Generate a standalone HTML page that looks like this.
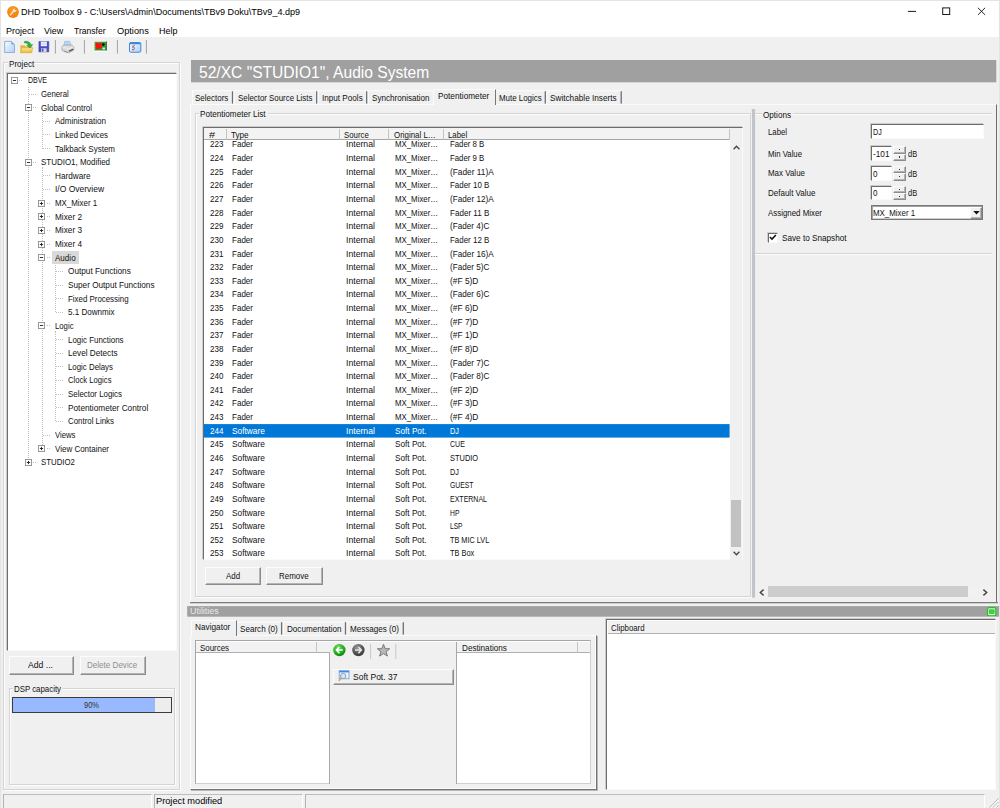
<!DOCTYPE html>
<html><head><meta charset="utf-8"><title>DHD Toolbox 9</title>
<style>
*{box-sizing:border-box;margin:0;padding:0}
html,body{width:1000px;height:808px;overflow:hidden;background:#f0f0f0}
body{font-family:"Liberation Sans",sans-serif;font-size:8.8px;color:#111;position:relative;letter-spacing:-0.3px}
body div,body span,body svg,body i,body b{position:absolute;display:block}
.x{white-space:nowrap;line-height:12px;height:12px;transform-origin:0 50%;letter-spacing:0;transform:scaleX(0.9)}
.gb{border:1px solid #d4d4d4;box-shadow:1px 1px 0 #fdfdfd, inset 1px 1px 0 #fdfdfd}
.sunk{background:#fff;border:1px solid #6c6c6c;border-right-color:#fafafa;border-bottom-color:#fafafa;box-shadow:-1px -1px 0 #cdcdcd}
.btn{background:#f0f0f0;border:1px solid #fcfcfc;border-right-color:#8c8c8c;border-bottom-color:#8c8c8c;box-shadow:inset -1px -1px 0 #b4b4b4}
.tsep{width:1.3px;background:#8e8e8e}
.csep{width:1px;background:#c4c4c4}
.hl{height:0;border-top:1px dotted #c0c0c0}
.vl{width:0;border-left:1px dotted #c0c0c0}
.ex{width:7px;height:7px;border:1px solid #959595;background:#fff}
.ex i{left:1px;top:2px;width:3px;height:1px;background:#222}
.ex b{left:2px;top:1px;width:1px;height:3px;background:#222}
</style></head><body>
<div style="left:0.0px;top:0.0px;width:1000.0px;height:37.0px;background:#fff"></div>
<div style="left:0.0px;top:0.0px;width:1000.0px;height:1.0px;background:#e4e4e4"></div>
<div style="left:999.0px;top:0.0px;width:1.0px;height:808.0px;background:#e4e4e4"></div>
<div style="left:0.0px;top:0.0px;width:1.0px;height:808.0px;background:#e4e4e4"></div>
<svg style="left:6.9px;top:5.6px" width="12" height="12" viewBox="0 0 12 12"><defs><radialGradient id="og" cx="0.45" cy="0.3" r="0.75"><stop offset="0" stop-color="#ff9a24"/><stop offset="1" stop-color="#f07c08"/></radialGradient></defs><circle cx="6" cy="6" r="5.9" fill="url(#og)"/><path d="M3.5 8.7L6.5 5.2" stroke="#f8e4cc" stroke-width="1.5" stroke-linecap="round"/><circle cx="7.6" cy="4.2" r="1.8" fill="#f8e4cc"/><path d="M7.9 3.9L9.9 1.9" stroke="#f5860f" stroke-width="1.25"/></svg>
<div class="x" style="left:21.2px;top:6.24px;font-size:9.5px;color:#000;letter-spacing:0;transform:scaleX(0.953);">DHD Toolbox 9 - C:\Users\Admin\Documents\TBv9 Doku\TBv9_4.dp9</div>
<svg style="left:900px;top:0px" width="100" height="24" viewBox="0 0 100 24"><path d="M7.9 11.4h8.1" stroke="#1a1a1a" stroke-width="1"/><rect x="42.7" y="7.9" width="7" height="6.6" fill="none" stroke="#1a1a1a" stroke-width="1"/><path d="M77.9 7.8l7.2 7.1M85.1 7.8l-7.2 7.1" stroke="#1a1a1a" stroke-width="0.95"/></svg>
<div class="x" style="left:6.0px;top:24.99px;font-size:9.5px;color:#000;letter-spacing:0;transform:scaleX(0.947);">Project</div>
<div class="x" style="left:44.4px;top:24.99px;font-size:9.5px;color:#000;letter-spacing:0;transform:scaleX(0.940);">View</div>
<div class="x" style="left:74.4px;top:24.99px;font-size:9.5px;color:#000;letter-spacing:0;transform:scaleX(0.902);">Transfer</div>
<div class="x" style="left:116.6px;top:24.99px;font-size:9.5px;color:#000;letter-spacing:0;transform:scaleX(0.971);">Options</div>
<div class="x" style="left:159.2px;top:24.99px;font-size:9.5px;color:#000;letter-spacing:0;transform:scaleX(0.941);">Help</div>
<svg style="left:0px;top:38px" width="160" height="20" viewBox="0 38 160 20"><defs><linearGradient id="pg" x1="0" y1="0" x2="1" y2="1"><stop offset="0" stop-color="#fdfeff"/><stop offset="1" stop-color="#a9d2f7"/></linearGradient><linearGradient id="fg" x1="0" y1="0" x2="0" y2="1"><stop offset="0" stop-color="#fbe793"/><stop offset="1" stop-color="#e8b93c"/></linearGradient><linearGradient id="wg" x1="0" y1="0" x2="1" y2="1"><stop offset="0" stop-color="#ffffff"/><stop offset="1" stop-color="#a8d0fa"/></linearGradient></defs><path d="M4.7 41.4h6.6l3.2 3.1v8h-9.8z" fill="url(#pg)" stroke="#8fa3dd" stroke-width="0.9"/><path d="M11.3 41.4v3.1h3.2z" fill="#6fa8ea"/><path d="M20.4 45.2h4.2l1 1.2h6.6v6.3H20.4z" fill="#e2b437"/><path d="M21.9 47.8h11l-1.6 5H20.4z" fill="url(#fg)" stroke="#d9a82c" stroke-width="0.5"/><path d="M24.3 41.5c3.3-.9 6 .4 6.6 3.3l1.9-.4-2.8 3.5-3.4-2.4 1.8-.3c-.5-1.6-1.9-2.4-4.1-2.3z" fill="#2fae3a" stroke="#1f8f2a" stroke-width="0.4"/><path d="M38.9 41.5h9.9v10.4h-9.9z" fill="#4a4ec4" stroke="#3a3aa8" stroke-width="0.5"/><rect x="40.8" y="41.6" width="6.1" height="4.6" fill="#f4f4f8"/><path d="M41.3 43h5.1M41.3 44.4h5.1" stroke="#c5c5d8" stroke-width="0.6"/><rect x="41" y="48.3" width="5.6" height="3.6" fill="#d9d9e6"/><rect x="41.7" y="48.8" width="1.7" height="2.8" fill="#4a4ec4"/><rect x="54.9" y="40" width="1" height="13.6" fill="#a3a3a3"/><path d="M64.6 41.3h5.3l1.2 4.6h-7.2z" fill="#b8d6f5" stroke="#8fb0de" stroke-width="0.5"/><path d="M62 46.2l2-1.2h7.4l2.4 1.6v3.6l-5 2.6-6.8-2.4z" fill="#dcdcdc" stroke="#8e8e8e" stroke-width="0.6"/><path d="M62.2 46.6l6.5 2.2 4.9-2.2" fill="none" stroke="#f6f6f6" stroke-width="0.7"/><path d="M68.9 51.3l4.2-2.1" stroke="#3a3a3a" stroke-width="1.1"/><path d="M64 51.2l3.8 1.3" stroke="#7a7a7a" stroke-width="0.7"/><rect x="83.9" y="40" width="1" height="13.6" fill="#a3a3a3"/><rect x="94.6" y="41.8" width="12.2" height="10" fill="#fff"/><rect x="94.6" y="41.8" width="12.2" height="8.7" fill="#2e9a35"/><path d="M95.5 43l2-.6 1.2 1 2-1.2 1.2 1.5-.5 2.2 1 1.6-1.5 1.3-1.8-.6-1.5 1.4-1.6-1-.5-2.5z" fill="#ff1010"/><path d="M95.6 42.2h5.5M95 43v6" stroke="#e6d23c" stroke-width="0.6" stroke-dasharray="0.8 0.8"/><circle cx="103.3" cy="44.6" r="1.3" fill="#0a0a0a"/><rect x="102.4" y="47.6" width="2.6" height="1.8" fill="#d8efd8"/><rect x="106.2" y="41.3" width="0.7" height="9.2" fill="#555"/><rect x="116.9" y="40" width="1" height="13.6" fill="#a3a3a3"/><rect x="129.5" y="42.5" width="11.3" height="9.7" rx="1.3" fill="url(#wg)" stroke="#3f86e0" stroke-width="1"/><path d="M129.5 44.3v-.6a1.3 1.3 0 0 1 1.3-1.3h8.7a1.3 1.3 0 0 1 1.3 1.3v.6z" fill="#3f86e0"/><path d="M132.2 45.6l1 1.2 1.4-1.9M132.2 49l1 1.2 1.4-1.9" stroke="#a33c2a" stroke-width="0.9" fill="none"/><path d="M132 47.6h2.8" stroke="#666" stroke-width="0.6"/><rect x="145.9" y="40" width="1" height="13.6" fill="#a3a3a3"/></svg>
<div class="gb" style="left:3.0px;top:62.4px;width:176.6px;height:727.7px;"></div>
<div style="left:7.8px;top:58.0px;width:27.0px;height:11.0px;background:#f0f0f0"></div>
<div class="x" style="left:8.8px;top:57.50px;letter-spacing:0;transform:scaleX(0.920);">Project</div>
<div class="sunk" style="left:7.0px;top:72.5px;width:169.5px;height:578.5px;"></div>
<div class="vl" style="left:27.9px;top:87.40px;height:371.00px"></div>
<div class="vl" style="left:41.5px;top:112.69px;height:35.93px"></div>
<div class="vl" style="left:41.5px;top:167.26px;height:277.50px"></div>
<div class="vl" style="left:55.1px;top:262.76px;height:49.57px"></div>
<div class="vl" style="left:55.1px;top:330.97px;height:90.50px"></div>
<div class="x" style="left:27.6px;top:74.30px;letter-spacing:0;transform:scaleX(0.793);">DBVE</div>
<svg style="left:11.10px;top:76.80px" width="7" height="7" viewBox="0 0 7 7"><rect x="0.45" y="0.45" width="6.1" height="6.1" fill="#fff" stroke="#8f8f8f" stroke-width="0.9"/><path d="M1.9 3.5h3.2" stroke="#1c1c1c" stroke-width="0.9"/></svg>
<div class="hl" style="left:19.3px;top:79.90px;width:3px"></div>
<div class="x" style="left:41.2px;top:87.94px;letter-spacing:0;transform:scaleX(0.888);">General</div>
<div class="hl" style="left:28.9px;top:93.54px;width:7px"></div>
<div class="x" style="left:41.2px;top:101.58px;letter-spacing:0;transform:scaleX(0.907);">Global Control</div>
<svg style="left:24.70px;top:104.09px" width="7" height="7" viewBox="0 0 7 7"><rect x="0.45" y="0.45" width="6.1" height="6.1" fill="#fff" stroke="#8f8f8f" stroke-width="0.9"/><path d="M1.9 3.5h3.2" stroke="#1c1c1c" stroke-width="0.9"/></svg>
<div class="hl" style="left:32.9px;top:107.19px;width:3px"></div>
<div class="x" style="left:54.8px;top:115.23px;letter-spacing:0;transform:scaleX(0.915);">Administration</div>
<div class="hl" style="left:42.5px;top:120.83px;width:7px"></div>
<div class="x" style="left:54.8px;top:128.87px;letter-spacing:0;transform:scaleX(0.888);">Linked Devices</div>
<div class="hl" style="left:42.5px;top:134.47px;width:7px"></div>
<div class="x" style="left:54.8px;top:142.51px;letter-spacing:0;transform:scaleX(0.909);">Talkback System</div>
<div class="hl" style="left:42.5px;top:148.12px;width:7px"></div>
<div class="x" style="left:41.2px;top:156.16px;letter-spacing:0;transform:scaleX(0.905);">STUDIO1, Modified</div>
<svg style="left:24.70px;top:158.66px" width="7" height="7" viewBox="0 0 7 7"><rect x="0.45" y="0.45" width="6.1" height="6.1" fill="#fff" stroke="#8f8f8f" stroke-width="0.9"/><path d="M1.9 3.5h3.2" stroke="#1c1c1c" stroke-width="0.9"/></svg>
<div class="hl" style="left:32.9px;top:161.76px;width:3px"></div>
<div class="x" style="left:54.8px;top:169.80px;letter-spacing:0;transform:scaleX(0.931);">Hardware</div>
<div class="hl" style="left:42.5px;top:175.40px;width:7px"></div>
<div class="x" style="left:54.8px;top:183.44px;letter-spacing:0;transform:scaleX(0.964);">I/O Overview</div>
<div class="hl" style="left:42.5px;top:189.04px;width:7px"></div>
<div class="x" style="left:54.8px;top:197.09px;letter-spacing:0;transform:scaleX(0.899);">MX_Mixer 1</div>
<svg style="left:38.30px;top:199.59px" width="7" height="7" viewBox="0 0 7 7"><rect x="0.45" y="0.45" width="6.1" height="6.1" fill="#fff" stroke="#8f8f8f" stroke-width="0.9"/><path d="M1.9 3.5h3.2" stroke="#1c1c1c" stroke-width="0.9"/><path d="M3.5 1.9v3.2" stroke="#1c1c1c" stroke-width="0.9"/></svg>
<div class="hl" style="left:46.5px;top:202.69px;width:3px"></div>
<div class="x" style="left:54.8px;top:210.73px;letter-spacing:0;transform:scaleX(0.936);">Mixer 2</div>
<svg style="left:38.30px;top:213.23px" width="7" height="7" viewBox="0 0 7 7"><rect x="0.45" y="0.45" width="6.1" height="6.1" fill="#fff" stroke="#8f8f8f" stroke-width="0.9"/><path d="M1.9 3.5h3.2" stroke="#1c1c1c" stroke-width="0.9"/><path d="M3.5 1.9v3.2" stroke="#1c1c1c" stroke-width="0.9"/></svg>
<div class="hl" style="left:46.5px;top:216.33px;width:3px"></div>
<div class="x" style="left:54.8px;top:224.37px;letter-spacing:0;transform:scaleX(0.936);">Mixer 3</div>
<svg style="left:38.30px;top:226.87px" width="7" height="7" viewBox="0 0 7 7"><rect x="0.45" y="0.45" width="6.1" height="6.1" fill="#fff" stroke="#8f8f8f" stroke-width="0.9"/><path d="M1.9 3.5h3.2" stroke="#1c1c1c" stroke-width="0.9"/><path d="M3.5 1.9v3.2" stroke="#1c1c1c" stroke-width="0.9"/></svg>
<div class="hl" style="left:46.5px;top:229.97px;width:3px"></div>
<div class="x" style="left:54.8px;top:238.01px;letter-spacing:0;transform:scaleX(0.936);">Mixer 4</div>
<svg style="left:38.30px;top:240.52px" width="7" height="7" viewBox="0 0 7 7"><rect x="0.45" y="0.45" width="6.1" height="6.1" fill="#fff" stroke="#8f8f8f" stroke-width="0.9"/><path d="M1.9 3.5h3.2" stroke="#1c1c1c" stroke-width="0.9"/><path d="M3.5 1.9v3.2" stroke="#1c1c1c" stroke-width="0.9"/></svg>
<div class="hl" style="left:46.5px;top:243.62px;width:3px"></div>
<div style="left:52.2px;top:251.0px;width:26.8px;height:13.2px;background:#d9d9d9"></div>
<div class="x" style="left:54.8px;top:251.66px;letter-spacing:0;transform:scaleX(0.916);">Audio</div>
<svg style="left:38.30px;top:254.16px" width="7" height="7" viewBox="0 0 7 7"><rect x="0.45" y="0.45" width="6.1" height="6.1" fill="#fff" stroke="#8f8f8f" stroke-width="0.9"/><path d="M1.9 3.5h3.2" stroke="#1c1c1c" stroke-width="0.9"/></svg>
<div class="hl" style="left:46.5px;top:257.26px;width:3px"></div>
<div class="x" style="left:68.4px;top:265.30px;letter-spacing:0;transform:scaleX(0.937);">Output Functions</div>
<div class="hl" style="left:56.1px;top:270.90px;width:7px"></div>
<div class="x" style="left:68.4px;top:278.94px;letter-spacing:0;transform:scaleX(0.931);">Super Output Functions</div>
<div class="hl" style="left:56.1px;top:284.55px;width:7px"></div>
<div class="x" style="left:68.4px;top:292.59px;letter-spacing:0;transform:scaleX(0.897);">Fixed Processing</div>
<div class="hl" style="left:56.1px;top:298.19px;width:7px"></div>
<div class="x" style="left:68.4px;top:306.23px;letter-spacing:0;transform:scaleX(0.914);">5.1 Downmix</div>
<div class="hl" style="left:56.1px;top:311.83px;width:7px"></div>
<div class="x" style="left:54.8px;top:319.87px;letter-spacing:0;transform:scaleX(0.880);">Logic</div>
<svg style="left:38.30px;top:322.37px" width="7" height="7" viewBox="0 0 7 7"><rect x="0.45" y="0.45" width="6.1" height="6.1" fill="#fff" stroke="#8f8f8f" stroke-width="0.9"/><path d="M1.9 3.5h3.2" stroke="#1c1c1c" stroke-width="0.9"/></svg>
<div class="hl" style="left:46.5px;top:325.47px;width:3px"></div>
<div class="x" style="left:68.4px;top:333.52px;letter-spacing:0;transform:scaleX(0.901);">Logic Functions</div>
<div class="hl" style="left:56.1px;top:339.12px;width:7px"></div>
<div class="x" style="left:68.4px;top:347.16px;letter-spacing:0;transform:scaleX(0.929);">Level Detects</div>
<div class="hl" style="left:56.1px;top:352.76px;width:7px"></div>
<div class="x" style="left:68.4px;top:360.80px;letter-spacing:0;transform:scaleX(0.893);">Logic Delays</div>
<div class="hl" style="left:56.1px;top:366.40px;width:7px"></div>
<div class="x" style="left:68.4px;top:374.44px;letter-spacing:0;transform:scaleX(0.872);">Clock Logics</div>
<div class="hl" style="left:56.1px;top:380.05px;width:7px"></div>
<div class="x" style="left:68.4px;top:388.09px;letter-spacing:0;transform:scaleX(0.898);">Selector Logics</div>
<div class="hl" style="left:56.1px;top:393.69px;width:7px"></div>
<div class="x" style="left:68.4px;top:401.73px;letter-spacing:0;transform:scaleX(0.938);">Potentiometer Control</div>
<div class="hl" style="left:56.1px;top:407.33px;width:7px"></div>
<div class="x" style="left:68.4px;top:415.37px;letter-spacing:0;transform:scaleX(0.896);">Control Links</div>
<div class="hl" style="left:56.1px;top:420.98px;width:7px"></div>
<div class="x" style="left:54.8px;top:429.02px;letter-spacing:0;transform:scaleX(0.879);">Views</div>
<div class="hl" style="left:42.5px;top:434.62px;width:7px"></div>
<div class="x" style="left:54.8px;top:442.66px;letter-spacing:0;transform:scaleX(0.908);">View Container</div>
<svg style="left:38.30px;top:445.16px" width="7" height="7" viewBox="0 0 7 7"><rect x="0.45" y="0.45" width="6.1" height="6.1" fill="#fff" stroke="#8f8f8f" stroke-width="0.9"/><path d="M1.9 3.5h3.2" stroke="#1c1c1c" stroke-width="0.9"/><path d="M3.5 1.9v3.2" stroke="#1c1c1c" stroke-width="0.9"/></svg>
<div class="hl" style="left:46.5px;top:448.26px;width:3px"></div>
<div class="x" style="left:41.2px;top:456.30px;letter-spacing:0;transform:scaleX(0.891);">STUDIO2</div>
<svg style="left:24.70px;top:458.80px" width="7" height="7" viewBox="0 0 7 7"><rect x="0.45" y="0.45" width="6.1" height="6.1" fill="#fff" stroke="#8f8f8f" stroke-width="0.9"/><path d="M1.9 3.5h3.2" stroke="#1c1c1c" stroke-width="0.9"/><path d="M3.5 1.9v3.2" stroke="#1c1c1c" stroke-width="0.9"/></svg>
<div class="hl" style="left:32.9px;top:461.90px;width:3px"></div>
<div class="btn" style="left:8.8px;top:656.0px;width:65.5px;height:19.0px;"></div>
<div class="x" style="left:27.9px;top:658.80px;letter-spacing:0;transform:scaleX(0.983);">Add ...</div>
<div class="btn" style="left:79.5px;top:656.0px;width:66.0px;height:19.0px;"></div>
<div class="x" style="left:86.5px;top:658.80px;color:#8f8f8f;letter-spacing:0;transform:scaleX(0.917);">Delete Device</div>
<div class="gb" style="left:8.5px;top:688.0px;width:166.0px;height:96.5px;"></div>
<div style="left:12.5px;top:683.0px;width:50.0px;height:11.0px;background:#f0f0f0"></div>
<div class="x" style="left:14.0px;top:683.20px;letter-spacing:0;transform:scaleX(0.893);">DSP capacity</div>
<div style="left:12.0px;top:697.3px;width:160.3px;height:15.5px;background:#ededed;border:1px solid #3c3c3c"></div>
<div style="left:13.0px;top:698.3px;width:142.3px;height:13.5px;background:#99b9fe"></div>
<div class="x" style="left:84.4px;top:698.80px;color:#333;letter-spacing:0;transform:scaleX(0.852);">90%</div>
<svg style="left:191px;top:60px" width="806" height="23"><rect x="0.00" y="0.00" width="805.30" height="22.30" fill="#a0a0a0"/></svg>
<div class="x" style="left:198.5px;top:61.81px;font-size:16.2px;color:#fff;line-height:20px;height:20px;letter-spacing:0;transform:scaleX(0.963);">52/XC "STUDIO1", Audio System</div>
<div style="left:189.5px;top:104.0px;width:807.5px;height:498.0px;border-top:1px solid #fbfbfb;border-left:1px solid #fbfbfb;border-right:1px solid #6e6e6e;"></div>
<div class="x" style="left:194.8px;top:91.60px;letter-spacing:0;transform:scaleX(0.908);">Selectors</div>
<svg style="left:231px;top:91px" width="3" height="13"><rect x="0.85" y="0.20" width="1.30" height="12.40" fill="#6e6e6e"/></svg>
<div class="x" style="left:237.7px;top:91.60px;letter-spacing:0;transform:scaleX(0.895);">Selector Source Lists</div>
<svg style="left:316px;top:91px" width="2" height="13"><rect x="0.05" y="0.20" width="1.30" height="12.40" fill="#6e6e6e"/></svg>
<div class="x" style="left:321.6px;top:91.60px;letter-spacing:0;transform:scaleX(0.925);">Input Pools</div>
<svg style="left:366px;top:91px" width="2" height="13"><rect x="0.05" y="0.20" width="1.30" height="12.40" fill="#6e6e6e"/></svg>
<div class="x" style="left:371.5px;top:91.60px;letter-spacing:0;transform:scaleX(0.920);">Synchronisation</div>
<div class="x" style="left:498.7px;top:91.60px;letter-spacing:0;transform:scaleX(0.900);">Mute Logics</div>
<svg style="left:544px;top:91px" width="2" height="13"><rect x="0.65" y="0.20" width="1.30" height="12.40" fill="#6e6e6e"/></svg>
<div class="x" style="left:550.4px;top:91.60px;letter-spacing:0;transform:scaleX(0.933);">Switchable Inserts</div>
<svg style="left:620px;top:91px" width="2" height="13"><rect x="0.55" y="0.20" width="1.30" height="12.40" fill="#6e6e6e"/></svg>
<svg style="left:192px;top:90px" width="41" height="2"><rect x="0.00" y="0.20" width="40.30" height="1.00" fill="#fcfcfc"/></svg>
<svg style="left:192px;top:90px" width="1" height="14"><rect x="0.00" y="0.20" width="1.00" height="13.80" fill="#fcfcfc"/></svg>
<svg style="left:233px;top:90px" width="84" height="2"><rect x="0.60" y="0.20" width="82.90" height="1.00" fill="#fcfcfc"/></svg>
<svg style="left:233px;top:90px" width="2" height="14"><rect x="0.60" y="0.20" width="1.00" height="13.80" fill="#fcfcfc"/></svg>
<svg style="left:317px;top:90px" width="50" height="2"><rect x="0.80" y="0.20" width="48.70" height="1.00" fill="#fcfcfc"/></svg>
<svg style="left:317px;top:90px" width="2" height="14"><rect x="0.80" y="0.20" width="1.00" height="13.80" fill="#fcfcfc"/></svg>
<svg style="left:367px;top:90px" width="66" height="2"><rect x="0.80" y="0.20" width="65.20" height="1.00" fill="#fcfcfc"/></svg>
<svg style="left:367px;top:90px" width="2" height="14"><rect x="0.80" y="0.20" width="1.00" height="13.80" fill="#fcfcfc"/></svg>
<svg style="left:496px;top:90px" width="50" height="2"><rect x="0.60" y="0.20" width="48.50" height="1.00" fill="#fcfcfc"/></svg>
<svg style="left:546px;top:90px" width="75" height="2"><rect x="0.40" y="0.20" width="74.60" height="1.00" fill="#fcfcfc"/></svg>
<svg style="left:546px;top:90px" width="2" height="14"><rect x="0.40" y="0.20" width="1.00" height="13.80" fill="#fcfcfc"/></svg>
<div style="left:433.0px;top:88.5px;width:63.0px;height:16.5px;background:#f0f0f0;border-top:1px solid #fbfbfb;border-left:1px solid #fbfbfb;border-right:1.5px solid #777"></div>
<div class="x" style="left:437.9px;top:90.10px;letter-spacing:0;transform:scaleX(0.936);">Potentiometer</div>
<div class="gb" style="left:195.0px;top:113.0px;width:555.5px;height:484.0px;"></div>
<div style="left:198.5px;top:108.0px;width:69.5px;height:11.0px;background:#f0f0f0"></div>
<div class="x" style="left:200.3px;top:108.10px;letter-spacing:0;transform:scaleX(0.925);">Potentiometer List</div>
<div class="sunk" style="left:203.0px;top:126.8px;width:540.3px;height:433.7px;"></div>
<div class="x" style="left:209.8px;top:138.45px;letter-spacing:0;transform:scaleX(0.912);">223</div>
<div class="x" style="left:232.2px;top:138.45px;letter-spacing:0;transform:scaleX(0.914);">Fader</div>
<div class="x" style="left:346.0px;top:138.45px;letter-spacing:0;transform:scaleX(0.985);">Internal</div>
<div class="x" style="left:395.0px;top:138.45px;letter-spacing:0;transform:scaleX(0.891);">MX_Mixer…</div>
<div class="x" style="left:449.9px;top:138.45px;letter-spacing:0;transform:scaleX(0.888);">Fader 8 B</div>
<div class="x" style="left:209.8px;top:152.08px;letter-spacing:0;transform:scaleX(0.912);">224</div>
<div class="x" style="left:232.2px;top:152.08px;letter-spacing:0;transform:scaleX(0.914);">Fader</div>
<div class="x" style="left:346.0px;top:152.08px;letter-spacing:0;transform:scaleX(0.985);">Internal</div>
<div class="x" style="left:395.0px;top:152.08px;letter-spacing:0;transform:scaleX(0.891);">MX_Mixer…</div>
<div class="x" style="left:449.9px;top:152.08px;letter-spacing:0;transform:scaleX(0.888);">Fader 9 B</div>
<div class="x" style="left:209.8px;top:165.71px;letter-spacing:0;transform:scaleX(0.912);">225</div>
<div class="x" style="left:232.2px;top:165.71px;letter-spacing:0;transform:scaleX(0.914);">Fader</div>
<div class="x" style="left:346.0px;top:165.71px;letter-spacing:0;transform:scaleX(0.985);">Internal</div>
<div class="x" style="left:395.0px;top:165.71px;letter-spacing:0;transform:scaleX(0.891);">MX_Mixer…</div>
<div class="x" style="left:449.9px;top:165.71px;letter-spacing:0;transform:scaleX(0.944);">(Fader 11)A</div>
<div class="x" style="left:209.8px;top:179.35px;letter-spacing:0;transform:scaleX(0.912);">226</div>
<div class="x" style="left:232.2px;top:179.35px;letter-spacing:0;transform:scaleX(0.914);">Fader</div>
<div class="x" style="left:346.0px;top:179.35px;letter-spacing:0;transform:scaleX(0.985);">Internal</div>
<div class="x" style="left:395.0px;top:179.35px;letter-spacing:0;transform:scaleX(0.891);">MX_Mixer…</div>
<div class="x" style="left:449.9px;top:179.35px;letter-spacing:0;transform:scaleX(0.903);">Fader 10 B</div>
<div class="x" style="left:209.8px;top:192.98px;letter-spacing:0;transform:scaleX(0.912);">227</div>
<div class="x" style="left:232.2px;top:192.98px;letter-spacing:0;transform:scaleX(0.914);">Fader</div>
<div class="x" style="left:346.0px;top:192.98px;letter-spacing:0;transform:scaleX(0.985);">Internal</div>
<div class="x" style="left:395.0px;top:192.98px;letter-spacing:0;transform:scaleX(0.891);">MX_Mixer…</div>
<div class="x" style="left:449.9px;top:192.98px;letter-spacing:0;transform:scaleX(0.931);">(Fader 12)A</div>
<div class="x" style="left:209.8px;top:206.61px;letter-spacing:0;transform:scaleX(0.912);">228</div>
<div class="x" style="left:232.2px;top:206.61px;letter-spacing:0;transform:scaleX(0.914);">Fader</div>
<div class="x" style="left:346.0px;top:206.61px;letter-spacing:0;transform:scaleX(0.985);">Internal</div>
<div class="x" style="left:395.0px;top:206.61px;letter-spacing:0;transform:scaleX(0.891);">MX_Mixer…</div>
<div class="x" style="left:449.9px;top:206.61px;letter-spacing:0;transform:scaleX(0.917);">Fader 11 B</div>
<div class="x" style="left:209.8px;top:220.25px;letter-spacing:0;transform:scaleX(0.912);">229</div>
<div class="x" style="left:232.2px;top:220.25px;letter-spacing:0;transform:scaleX(0.914);">Fader</div>
<div class="x" style="left:346.0px;top:220.25px;letter-spacing:0;transform:scaleX(0.985);">Internal</div>
<div class="x" style="left:395.0px;top:220.25px;letter-spacing:0;transform:scaleX(0.891);">MX_Mixer…</div>
<div class="x" style="left:449.9px;top:220.25px;letter-spacing:0;transform:scaleX(0.924);">(Fader 4)C</div>
<div class="x" style="left:209.8px;top:233.88px;letter-spacing:0;transform:scaleX(0.912);">230</div>
<div class="x" style="left:232.2px;top:233.88px;letter-spacing:0;transform:scaleX(0.914);">Fader</div>
<div class="x" style="left:346.0px;top:233.88px;letter-spacing:0;transform:scaleX(0.985);">Internal</div>
<div class="x" style="left:395.0px;top:233.88px;letter-spacing:0;transform:scaleX(0.891);">MX_Mixer…</div>
<div class="x" style="left:449.9px;top:233.88px;letter-spacing:0;transform:scaleX(0.903);">Fader 12 B</div>
<div class="x" style="left:209.8px;top:247.51px;letter-spacing:0;transform:scaleX(0.912);">231</div>
<div class="x" style="left:232.2px;top:247.51px;letter-spacing:0;transform:scaleX(0.914);">Fader</div>
<div class="x" style="left:346.0px;top:247.51px;letter-spacing:0;transform:scaleX(0.985);">Internal</div>
<div class="x" style="left:395.0px;top:247.51px;letter-spacing:0;transform:scaleX(0.891);">MX_Mixer…</div>
<div class="x" style="left:449.9px;top:247.51px;letter-spacing:0;transform:scaleX(0.931);">(Fader 16)A</div>
<div class="x" style="left:209.8px;top:261.15px;letter-spacing:0;transform:scaleX(0.912);">232</div>
<div class="x" style="left:232.2px;top:261.15px;letter-spacing:0;transform:scaleX(0.914);">Fader</div>
<div class="x" style="left:346.0px;top:261.15px;letter-spacing:0;transform:scaleX(0.985);">Internal</div>
<div class="x" style="left:395.0px;top:261.15px;letter-spacing:0;transform:scaleX(0.891);">MX_Mixer…</div>
<div class="x" style="left:449.9px;top:261.15px;letter-spacing:0;transform:scaleX(0.924);">(Fader 5)C</div>
<div class="x" style="left:209.8px;top:274.78px;letter-spacing:0;transform:scaleX(0.912);">233</div>
<div class="x" style="left:232.2px;top:274.78px;letter-spacing:0;transform:scaleX(0.914);">Fader</div>
<div class="x" style="left:346.0px;top:274.78px;letter-spacing:0;transform:scaleX(0.985);">Internal</div>
<div class="x" style="left:395.0px;top:274.78px;letter-spacing:0;transform:scaleX(0.891);">MX_Mixer…</div>
<div class="x" style="left:449.9px;top:274.78px;letter-spacing:0;transform:scaleX(0.952);">(#F 5)D</div>
<div class="x" style="left:209.8px;top:288.41px;letter-spacing:0;transform:scaleX(0.912);">234</div>
<div class="x" style="left:232.2px;top:288.41px;letter-spacing:0;transform:scaleX(0.914);">Fader</div>
<div class="x" style="left:346.0px;top:288.41px;letter-spacing:0;transform:scaleX(0.985);">Internal</div>
<div class="x" style="left:395.0px;top:288.41px;letter-spacing:0;transform:scaleX(0.891);">MX_Mixer…</div>
<div class="x" style="left:449.9px;top:288.41px;letter-spacing:0;transform:scaleX(0.924);">(Fader 6)C</div>
<div class="x" style="left:209.8px;top:302.04px;letter-spacing:0;transform:scaleX(0.912);">235</div>
<div class="x" style="left:232.2px;top:302.04px;letter-spacing:0;transform:scaleX(0.914);">Fader</div>
<div class="x" style="left:346.0px;top:302.04px;letter-spacing:0;transform:scaleX(0.985);">Internal</div>
<div class="x" style="left:395.0px;top:302.04px;letter-spacing:0;transform:scaleX(0.891);">MX_Mixer…</div>
<div class="x" style="left:449.9px;top:302.04px;letter-spacing:0;transform:scaleX(0.952);">(#F 6)D</div>
<div class="x" style="left:209.8px;top:315.68px;letter-spacing:0;transform:scaleX(0.912);">236</div>
<div class="x" style="left:232.2px;top:315.68px;letter-spacing:0;transform:scaleX(0.914);">Fader</div>
<div class="x" style="left:346.0px;top:315.68px;letter-spacing:0;transform:scaleX(0.985);">Internal</div>
<div class="x" style="left:395.0px;top:315.68px;letter-spacing:0;transform:scaleX(0.891);">MX_Mixer…</div>
<div class="x" style="left:449.9px;top:315.68px;letter-spacing:0;transform:scaleX(0.952);">(#F 7)D</div>
<div class="x" style="left:209.8px;top:329.31px;letter-spacing:0;transform:scaleX(0.912);">237</div>
<div class="x" style="left:232.2px;top:329.31px;letter-spacing:0;transform:scaleX(0.914);">Fader</div>
<div class="x" style="left:346.0px;top:329.31px;letter-spacing:0;transform:scaleX(0.985);">Internal</div>
<div class="x" style="left:395.0px;top:329.31px;letter-spacing:0;transform:scaleX(0.891);">MX_Mixer…</div>
<div class="x" style="left:449.9px;top:329.31px;letter-spacing:0;transform:scaleX(0.952);">(#F 1)D</div>
<div class="x" style="left:209.8px;top:342.94px;letter-spacing:0;transform:scaleX(0.912);">238</div>
<div class="x" style="left:232.2px;top:342.94px;letter-spacing:0;transform:scaleX(0.914);">Fader</div>
<div class="x" style="left:346.0px;top:342.94px;letter-spacing:0;transform:scaleX(0.985);">Internal</div>
<div class="x" style="left:395.0px;top:342.94px;letter-spacing:0;transform:scaleX(0.891);">MX_Mixer…</div>
<div class="x" style="left:449.9px;top:342.94px;letter-spacing:0;transform:scaleX(0.952);">(#F 8)D</div>
<div class="x" style="left:209.8px;top:356.58px;letter-spacing:0;transform:scaleX(0.912);">239</div>
<div class="x" style="left:232.2px;top:356.58px;letter-spacing:0;transform:scaleX(0.914);">Fader</div>
<div class="x" style="left:346.0px;top:356.58px;letter-spacing:0;transform:scaleX(0.985);">Internal</div>
<div class="x" style="left:395.0px;top:356.58px;letter-spacing:0;transform:scaleX(0.891);">MX_Mixer…</div>
<div class="x" style="left:449.9px;top:356.58px;letter-spacing:0;transform:scaleX(0.924);">(Fader 7)C</div>
<div class="x" style="left:209.8px;top:370.21px;letter-spacing:0;transform:scaleX(0.912);">240</div>
<div class="x" style="left:232.2px;top:370.21px;letter-spacing:0;transform:scaleX(0.914);">Fader</div>
<div class="x" style="left:346.0px;top:370.21px;letter-spacing:0;transform:scaleX(0.985);">Internal</div>
<div class="x" style="left:395.0px;top:370.21px;letter-spacing:0;transform:scaleX(0.891);">MX_Mixer…</div>
<div class="x" style="left:449.9px;top:370.21px;letter-spacing:0;transform:scaleX(0.924);">(Fader 8)C</div>
<div class="x" style="left:209.8px;top:383.84px;letter-spacing:0;transform:scaleX(0.912);">241</div>
<div class="x" style="left:232.2px;top:383.84px;letter-spacing:0;transform:scaleX(0.914);">Fader</div>
<div class="x" style="left:346.0px;top:383.84px;letter-spacing:0;transform:scaleX(0.985);">Internal</div>
<div class="x" style="left:395.0px;top:383.84px;letter-spacing:0;transform:scaleX(0.891);">MX_Mixer…</div>
<div class="x" style="left:449.9px;top:383.84px;letter-spacing:0;transform:scaleX(0.952);">(#F 2)D</div>
<div class="x" style="left:209.8px;top:397.48px;letter-spacing:0;transform:scaleX(0.912);">242</div>
<div class="x" style="left:232.2px;top:397.48px;letter-spacing:0;transform:scaleX(0.914);">Fader</div>
<div class="x" style="left:346.0px;top:397.48px;letter-spacing:0;transform:scaleX(0.985);">Internal</div>
<div class="x" style="left:395.0px;top:397.48px;letter-spacing:0;transform:scaleX(0.891);">MX_Mixer…</div>
<div class="x" style="left:449.9px;top:397.48px;letter-spacing:0;transform:scaleX(0.952);">(#F 3)D</div>
<div class="x" style="left:209.8px;top:411.11px;letter-spacing:0;transform:scaleX(0.912);">243</div>
<div class="x" style="left:232.2px;top:411.11px;letter-spacing:0;transform:scaleX(0.914);">Fader</div>
<div class="x" style="left:346.0px;top:411.11px;letter-spacing:0;transform:scaleX(0.985);">Internal</div>
<div class="x" style="left:395.0px;top:411.11px;letter-spacing:0;transform:scaleX(0.891);">MX_Mixer…</div>
<div class="x" style="left:449.9px;top:411.11px;letter-spacing:0;transform:scaleX(0.952);">(#F 4)D</div>
<svg style="left:204px;top:424px" width="526" height="14"><rect x="0.00" y="0.09" width="525.60" height="13.50" fill="#0078d7"/></svg>
<div class="x" style="left:209.8px;top:424.74px;color:#fff;letter-spacing:0;transform:scaleX(0.912);">244</div>
<div class="x" style="left:232.2px;top:424.74px;color:#fff;letter-spacing:0;transform:scaleX(0.948);">Software</div>
<div class="x" style="left:346.0px;top:424.74px;color:#fff;letter-spacing:0;transform:scaleX(0.985);">Internal</div>
<div class="x" style="left:395.0px;top:424.74px;color:#fff;letter-spacing:0;transform:scaleX(0.933);">Soft Pot.</div>
<div class="x" style="left:449.9px;top:424.74px;color:#fff;letter-spacing:0;transform:scaleX(0.827);">DJ</div>
<div class="x" style="left:209.8px;top:438.37px;letter-spacing:0;transform:scaleX(0.912);">245</div>
<div class="x" style="left:232.2px;top:438.37px;letter-spacing:0;transform:scaleX(0.948);">Software</div>
<div class="x" style="left:346.0px;top:438.37px;letter-spacing:0;transform:scaleX(0.985);">Internal</div>
<div class="x" style="left:395.0px;top:438.37px;letter-spacing:0;transform:scaleX(0.933);">Soft Pot.</div>
<div class="x" style="left:449.9px;top:438.37px;letter-spacing:0;transform:scaleX(0.797);">CUE</div>
<div class="x" style="left:209.8px;top:452.01px;letter-spacing:0;transform:scaleX(0.912);">246</div>
<div class="x" style="left:232.2px;top:452.01px;letter-spacing:0;transform:scaleX(0.948);">Software</div>
<div class="x" style="left:346.0px;top:452.01px;letter-spacing:0;transform:scaleX(0.985);">Internal</div>
<div class="x" style="left:395.0px;top:452.01px;letter-spacing:0;transform:scaleX(0.933);">Soft Pot.</div>
<div class="x" style="left:449.9px;top:452.01px;letter-spacing:0;transform:scaleX(0.846);">STUDIO</div>
<div class="x" style="left:209.8px;top:465.64px;letter-spacing:0;transform:scaleX(0.912);">247</div>
<div class="x" style="left:232.2px;top:465.64px;letter-spacing:0;transform:scaleX(0.948);">Software</div>
<div class="x" style="left:346.0px;top:465.64px;letter-spacing:0;transform:scaleX(0.985);">Internal</div>
<div class="x" style="left:395.0px;top:465.64px;letter-spacing:0;transform:scaleX(0.933);">Soft Pot.</div>
<div class="x" style="left:449.9px;top:465.64px;letter-spacing:0;transform:scaleX(0.827);">DJ</div>
<div class="x" style="left:209.8px;top:479.27px;letter-spacing:0;transform:scaleX(0.912);">248</div>
<div class="x" style="left:232.2px;top:479.27px;letter-spacing:0;transform:scaleX(0.948);">Software</div>
<div class="x" style="left:346.0px;top:479.27px;letter-spacing:0;transform:scaleX(0.985);">Internal</div>
<div class="x" style="left:395.0px;top:479.27px;letter-spacing:0;transform:scaleX(0.933);">Soft Pot.</div>
<div class="x" style="left:449.9px;top:479.27px;letter-spacing:0;transform:scaleX(0.772);">GUEST</div>
<div class="x" style="left:209.8px;top:492.91px;letter-spacing:0;transform:scaleX(0.912);">249</div>
<div class="x" style="left:232.2px;top:492.91px;letter-spacing:0;transform:scaleX(0.948);">Software</div>
<div class="x" style="left:346.0px;top:492.91px;letter-spacing:0;transform:scaleX(0.985);">Internal</div>
<div class="x" style="left:395.0px;top:492.91px;letter-spacing:0;transform:scaleX(0.933);">Soft Pot.</div>
<div class="x" style="left:449.9px;top:492.91px;letter-spacing:0;transform:scaleX(0.797);">EXTERNAL</div>
<div class="x" style="left:209.8px;top:506.54px;letter-spacing:0;transform:scaleX(0.912);">250</div>
<div class="x" style="left:232.2px;top:506.54px;letter-spacing:0;transform:scaleX(0.948);">Software</div>
<div class="x" style="left:346.0px;top:506.54px;letter-spacing:0;transform:scaleX(0.985);">Internal</div>
<div class="x" style="left:395.0px;top:506.54px;letter-spacing:0;transform:scaleX(0.933);">Soft Pot.</div>
<div class="x" style="left:449.9px;top:506.54px;letter-spacing:0;transform:scaleX(0.768);">HP</div>
<div class="x" style="left:209.8px;top:520.17px;letter-spacing:0;transform:scaleX(0.912);">251</div>
<div class="x" style="left:232.2px;top:520.17px;letter-spacing:0;transform:scaleX(0.948);">Software</div>
<div class="x" style="left:346.0px;top:520.17px;letter-spacing:0;transform:scaleX(0.985);">Internal</div>
<div class="x" style="left:395.0px;top:520.17px;letter-spacing:0;transform:scaleX(0.933);">Soft Pot.</div>
<div class="x" style="left:449.9px;top:520.17px;letter-spacing:0;transform:scaleX(0.751);">LSP</div>
<div class="x" style="left:209.8px;top:533.81px;letter-spacing:0;transform:scaleX(0.912);">252</div>
<div class="x" style="left:232.2px;top:533.81px;letter-spacing:0;transform:scaleX(0.948);">Software</div>
<div class="x" style="left:346.0px;top:533.81px;letter-spacing:0;transform:scaleX(0.985);">Internal</div>
<div class="x" style="left:395.0px;top:533.81px;letter-spacing:0;transform:scaleX(0.933);">Soft Pot.</div>
<div class="x" style="left:449.9px;top:533.81px;letter-spacing:0;transform:scaleX(0.831);">TB MIC LVL</div>
<div class="x" style="left:209.8px;top:547.44px;letter-spacing:0;transform:scaleX(0.912);">253</div>
<div class="x" style="left:232.2px;top:547.44px;letter-spacing:0;transform:scaleX(0.948);">Software</div>
<div class="x" style="left:346.0px;top:547.44px;letter-spacing:0;transform:scaleX(0.985);">Internal</div>
<div class="x" style="left:395.0px;top:547.44px;letter-spacing:0;transform:scaleX(0.933);">Soft Pot.</div>
<div class="x" style="left:449.9px;top:547.44px;letter-spacing:0;transform:scaleX(0.839);">TB Box</div>
<div style="left:204.0px;top:127.7px;width:526.0px;height:12.8px;background:#f3f3f3;border-bottom:1px solid #a6a6a6"></div>
<div class="x" style="left:208.9px;top:128.50px;letter-spacing:0;transform:scaleX(1.243);">#</div>
<div class="x" style="left:231.1px;top:128.50px;letter-spacing:0;transform:scaleX(0.923);">Type</div>
<div class="x" style="left:344.2px;top:128.50px;letter-spacing:0;transform:scaleX(0.890);">Source</div>
<div class="x" style="left:393.6px;top:128.50px;letter-spacing:0;transform:scaleX(0.898);">Original L…</div>
<div class="x" style="left:447.9px;top:128.50px;letter-spacing:0;transform:scaleX(0.892);">Label</div>
<div class="csep" style="left:225.9px;top:128.5px;width:1.0px;height:11.5px;"></div>
<div class="csep" style="left:338.9px;top:128.5px;width:1.0px;height:11.5px;"></div>
<div class="csep" style="left:388.1px;top:128.5px;width:1.0px;height:11.5px;"></div>
<div class="csep" style="left:442.7px;top:128.5px;width:1.0px;height:11.5px;"></div>
<div class="csep" style="left:729.1px;top:128.5px;width:1.0px;height:11.5px;"></div>
<div style="left:730.0px;top:128.0px;width:12.3px;height:431.5px;background:#f0f0f0"></div>
<div style="left:730.7px;top:499.9px;width:10.8px;height:47.0px;background:#c2c2c2"></div>
<svg style="left:733.2px;top:145.2px" width="7" height="5" viewBox="0 0 7 5"><path d="M0.6 4.2L3.5 1.2 6.4 4.2" stroke="#444" stroke-width="1.3" fill="none"/></svg><svg style="left:733.2px;top:551.3px" width="7" height="5" viewBox="0 0 7 5"><path d="M0.6 0.8L3.5 3.8 6.4 0.8" stroke="#444" stroke-width="1.3" fill="none"/></svg>
<div class="btn" style="left:204.5px;top:566.7px;width:56.8px;height:18.2px;"></div>
<div class="x" style="left:225.7px;top:569.60px;letter-spacing:0;transform:scaleX(0.901);">Add</div>
<div class="btn" style="left:266.0px;top:566.7px;width:56.8px;height:18.2px;"></div>
<div class="x" style="left:278.9px;top:569.60px;letter-spacing:0;transform:scaleX(0.903);">Remove</div>
<svg style="left:751px;top:109px" width="5" height="489"><rect x="0.80" y="0.00" width="3.30" height="488.60" fill="#c1c4cb"/></svg>
<div style="left:755.4px;top:113.0px;width:236.2px;height:140.5px;border-top:1px solid #d4d4d4;border-bottom:1px solid #d4d4d4;box-shadow:0 1px 0 #fdfdfd, inset 0 1px 0 #fdfdfd"></div>
<div style="left:761.5px;top:108.0px;width:31.5px;height:11.0px;background:#f0f0f0"></div>
<div class="x" style="left:763.2px;top:108.50px;letter-spacing:0;transform:scaleX(0.923);">Options</div>
<div class="x" style="left:767.8px;top:125.70px;letter-spacing:0;transform:scaleX(0.887);">Label</div>
<div class="x" style="left:767.8px;top:147.60px;letter-spacing:0;transform:scaleX(0.884);">Min Value</div>
<div class="x" style="left:767.8px;top:167.40px;letter-spacing:0;transform:scaleX(0.904);">Max Value</div>
<div class="x" style="left:767.8px;top:187.20px;letter-spacing:0;transform:scaleX(0.910);">Default Value</div>
<div class="x" style="left:767.8px;top:207.00px;letter-spacing:0;transform:scaleX(0.898);">Assigned Mixer</div>
<div class="sunk" style="left:870.5px;top:124.3px;width:113.0px;height:14.8px;"></div>
<div class="x" style="left:872.6px;top:126.10px;letter-spacing:0;transform:scaleX(0.808);">DJ</div>
<div class="sunk" style="left:870.5px;top:146.2px;width:21.8px;height:14.6px;"></div>
<div class="x" style="left:872.9px;top:147.80px;letter-spacing:0;transform:scaleX(0.937);">-101</div>
<div class="btn" style="left:893.3px;top:146.2px;width:12.6px;height:7.4px;"></div>
<div class="btn" style="left:893.3px;top:153.5px;width:12.6px;height:7.4px;"></div>
<div style="left:899.0px;top:149.2px;width:1.3px;height:1.3px;background:#333"></div>
<div style="left:899.0px;top:156.4px;width:1.3px;height:1.3px;background:#333"></div>
<div class="x" style="left:908.0px;top:147.80px;letter-spacing:0;transform:scaleX(0.845);">dB</div>
<div class="sunk" style="left:870.5px;top:166.0px;width:21.8px;height:14.6px;"></div>
<div class="x" style="left:872.9px;top:167.60px;letter-spacing:0;transform:scaleX(0.917);">0</div>
<div class="btn" style="left:893.3px;top:166.0px;width:12.6px;height:7.4px;"></div>
<div class="btn" style="left:893.3px;top:173.3px;width:12.6px;height:7.4px;"></div>
<div style="left:899.0px;top:169.0px;width:1.3px;height:1.3px;background:#333"></div>
<div style="left:899.0px;top:176.2px;width:1.3px;height:1.3px;background:#333"></div>
<div class="x" style="left:908.0px;top:167.60px;letter-spacing:0;transform:scaleX(0.845);">dB</div>
<div class="sunk" style="left:870.5px;top:185.8px;width:21.8px;height:14.6px;"></div>
<div class="x" style="left:872.9px;top:187.30px;letter-spacing:0;transform:scaleX(0.917);">0</div>
<div class="btn" style="left:893.3px;top:185.8px;width:12.6px;height:7.4px;"></div>
<div class="btn" style="left:893.3px;top:193.1px;width:12.6px;height:7.4px;"></div>
<div style="left:899.0px;top:188.8px;width:1.3px;height:1.3px;background:#333"></div>
<div style="left:899.0px;top:196.0px;width:1.3px;height:1.3px;background:#333"></div>
<div class="x" style="left:908.0px;top:187.30px;letter-spacing:0;transform:scaleX(0.845);">dB</div>
<div style="left:870.6px;top:205.0px;width:112.4px;height:14.9px;background:#fff;border:1px solid #777;box-shadow:inset 1px 1px 0 #a4a4a4, inset -1px -1px 0 #cfcfcf"></div>
<div class="x" style="left:872.9px;top:207.40px;letter-spacing:0;transform:scaleX(0.897);">MX_Mixer 1</div>
<div class="btn" style="left:970.0px;top:206.6px;width:12.0px;height:12.2px;"></div>
<svg style="left:973px;top:211.2px" width="7" height="4" viewBox="0 0 7 4"><path d="M0.3 0h6.4L3.5 3.6z" fill="#111"/></svg>
<div class="sunk" style="left:768.0px;top:233.2px;width:9.6px;height:9.4px;"></div>
<svg style="left:769.3px;top:234.4px" width="8" height="7" viewBox="0 0 8 7"><path d="M0.9 2.9L3 5.1 6.9 0.9" stroke="#111" stroke-width="1.5" fill="none"/></svg>
<div class="x" style="left:781.5px;top:232.40px;letter-spacing:0;transform:scaleX(0.929);">Save to Snapshot</div>
<div style="left:756.0px;top:585.5px;width:240.0px;height:12.5px;background:#f1f1f1"></div>
<div style="left:768.3px;top:586.3px;width:199.5px;height:10.6px;background:#cdcdcd"></div>
<svg style="left:758.5px;top:588.5px" width="6" height="7" viewBox="0 0 6 7"><path d="M4.6 0.6L1.3 3.5 4.6 6.4" stroke="#444" stroke-width="1.4" fill="none"/></svg>
<svg style="left:981.5px;top:588.5px" width="6" height="7" viewBox="0 0 6 7"><path d="M1.4 0.6L4.7 3.5 1.4 6.4" stroke="#444" stroke-width="1.4" fill="none"/></svg>
<div style="left:189.5px;top:602.0px;width:808.0px;height:1.0px;background:#7c7c7c"></div>
<div style="left:189.5px;top:603.0px;width:808.0px;height:1.0px;background:#cfcfcf"></div>
<svg style="left:187px;top:606px" width="812" height="11"><rect x="0.20" y="0.10" width="811.80" height="10.60" fill="#a0a0a0"/></svg>
<div class="x" style="left:190.3px;top:605.49px;font-size:9.2px;color:#e9e9e9;letter-spacing:0;transform:scaleX(0.969);">Utilities</div>
<svg style="left:987.3px;top:606.7px" width="9.4" height="9.4" viewBox="0 0 10 10"><rect x="0.6" y="0.6" width="8.8" height="8.8" rx="1.4" fill="#d9f5d9" stroke="#1fc01f" stroke-width="1.2"/><rect x="2.4" y="3" width="5.2" height="3.8" fill="#3fd43f" stroke="#1fc01f" stroke-width="0.7"/></svg>
<div style="left:189.5px;top:634.5px;width:407.0px;height:155.0px;border-top:1px solid #fbfbfb;border-left:1px solid #fbfbfb;border-right:1px solid #727272;border-bottom:1px solid #727272;box-shadow:1px 1px 0 #b8b8b8, inset -1px -1px 0 #fbfbfb"></div>
<div style="left:191.3px;top:620.2px;width:45.8px;height:15.5px;background:#f0f0f0;border-top:1px solid #fbfbfb;border-left:1px solid #fbfbfb;border-right:1.5px solid #777"></div>
<svg style="left:237px;top:621px" width="45" height="2"><rect x="0.20" y="0.60" width="44.20" height="1.00" fill="#fcfcfc"/></svg>
<svg style="left:282px;top:621px" width="64" height="2"><rect x="0.70" y="0.60" width="62.60" height="1.00" fill="#fcfcfc"/></svg>
<svg style="left:282px;top:621px" width="2" height="14"><rect x="0.70" y="0.60" width="1.00" height="13.00" fill="#fcfcfc"/></svg>
<svg style="left:346px;top:621px" width="58" height="2"><rect x="0.60" y="0.60" width="56.50" height="1.00" fill="#fcfcfc"/></svg>
<svg style="left:346px;top:621px" width="2" height="14"><rect x="0.60" y="0.60" width="1.00" height="13.00" fill="#fcfcfc"/></svg>
<div class="x" style="left:194.8px;top:621.20px;letter-spacing:0;transform:scaleX(0.937);">Navigator</div>
<div class="x" style="left:239.6px;top:622.60px;letter-spacing:0;transform:scaleX(0.920);">Search (0)</div>
<svg style="left:280px;top:622px" width="3" height="13"><rect x="0.95" y="0.20" width="1.30" height="12.40" fill="#6e6e6e"/></svg>
<div class="x" style="left:286.5px;top:622.60px;letter-spacing:0;transform:scaleX(0.921);">Documentation</div>
<svg style="left:344px;top:622px" width="3" height="13"><rect x="0.85" y="0.20" width="1.30" height="12.40" fill="#6e6e6e"/></svg>
<div class="x" style="left:350.1px;top:622.60px;letter-spacing:0;transform:scaleX(0.919);">Messages (0)</div>
<svg style="left:402px;top:622px" width="2" height="13"><rect x="0.65" y="0.20" width="1.30" height="12.40" fill="#6e6e6e"/></svg>
<div style="left:194.8px;top:640.2px;width:396.0px;height:144.0px;background:#fff;border:1px solid #a6a6a6;border-right-color:#cfcfcf;border-bottom-color:#cfcfcf"></div>
<div style="left:329.3px;top:641.5px;width:127.6px;height:142.0px;background:#f0f0f0;border-left:1px solid #a8a8a8;border-right:1px solid #a8a8a8"></div>
<div style="left:196.0px;top:641.7px;width:133.5px;height:11.8px;background:#f2f2f2;border-bottom:1px solid #b0b0b0"></div>
<div class="csep" style="left:316.3px;top:642.0px;width:1.0px;height:10.8px;"></div>
<div class="x" style="left:200.1px;top:642.10px;letter-spacing:0;transform:scaleX(0.898);">Sources</div>
<div style="left:457.3px;top:641.7px;width:133.0px;height:11.8px;background:#f2f2f2;border-bottom:1px solid #b0b0b0"></div>
<div class="csep" style="left:576.8px;top:642.0px;width:1.0px;height:10.8px;"></div>
<div class="x" style="left:461.5px;top:642.10px;letter-spacing:0;transform:scaleX(0.927);">Destinations</div>
<svg style="left:330.8px;top:641.5px" width="70" height="18" viewBox="330.8 641.5 70 18"><defs><radialGradient id="gg" cx="0.4" cy="0.3" r="0.8"><stop offset="0" stop-color="#6fe05c"/><stop offset="0.6" stop-color="#21a81e"/><stop offset="1" stop-color="#0d7a10"/></radialGradient><radialGradient id="kg" cx="0.4" cy="0.3" r="0.8"><stop offset="0" stop-color="#9a9a9a"/><stop offset="0.6" stop-color="#505050"/><stop offset="1" stop-color="#2c2c2c"/></radialGradient></defs><circle cx="339.2" cy="649.6" r="6.2" fill="url(#gg)"/><path d="M342.6 649.6h-6.2M339.2 646.6l-3 3 3 3" stroke="#fff" stroke-width="1.5" fill="none"/><circle cx="358.2" cy="649.6" r="6.2" fill="url(#kg)"/><path d="M354.8 649.6h6.2M358.2 646.6l3 3-3 3" stroke="#e8e8e8" stroke-width="1.5" fill="none"/><rect x="369.9" y="643.3" width="1" height="15.4" fill="#c8c8c8"/><rect x="395.1" y="643.3" width="1" height="15.4" fill="#c8c8c8"/><path d="M383.3 643.8l1.7 4.3 4.5.2-3.5 2.9 1.2 4.4-3.9-2.5-3.9 2.5 1.2-4.4-3.5-2.9 4.5-.2z" fill="#b8b8b8" stroke="#707070" stroke-width="0.9"/></svg>
<div class="btn" style="left:332.6px;top:668.5px;width:121.3px;height:16.0px;"></div>
<svg style="left:338px;top:670px" width="12" height="12" viewBox="0 0 12 12"><rect x="1.2" y="0.8" width="9.8" height="8" fill="#eef5fd" stroke="#5b9be6" stroke-width="0.8"/><rect x="1.2" y="0.8" width="9.8" height="1.6" fill="#3d88e6"/><circle cx="5.2" cy="6" r="2.7" fill="#cfe6fb" stroke="#8a9aa8" stroke-width="0.9"/><path d="M3.3 8.1L0.8 10.9" stroke="#e39a2a" stroke-width="1.4"/></svg>
<div class="x" style="left:352.6px;top:671.00px;letter-spacing:0;transform:scaleX(0.966);">Soft Pot. 37</div>
<div class="sunk" style="left:605.6px;top:619.4px;width:390.8px;height:170.4px;"></div>
<div style="left:607.6px;top:621.4px;width:387.8px;height:12.6px;background:#f1f1f1;border-bottom:1px solid #b0b0b0"></div>
<div class="x" style="left:611.3px;top:621.90px;letter-spacing:0;transform:scaleX(0.892);">Clipboard</div>
<div style="left:2.7px;top:794.0px;width:149.0px;height:14.0px;border-left:1px solid #b4b4b4;border-top:1px solid #bdbdbd;border-right:1px solid #fff"></div>
<div style="left:154.2px;top:794.0px;width:148.8px;height:14.0px;border-left:1px solid #b4b4b4;border-top:1px solid #bdbdbd;border-right:1px solid #fff"></div>
<div style="left:305.0px;top:794.0px;width:680.0px;height:14.0px;border-left:1px solid #b4b4b4;border-top:1px solid #bdbdbd;border-right:1px solid #fff"></div>
<div class="x" style="left:155.6px;top:794.69px;font-size:9.4px;color:#000;letter-spacing:0;transform:scaleX(0.985);">Project modified</div>
<svg style="left:988px;top:796.5px" width="11" height="11" viewBox="0 0 11 11"><path d="M10.5 1.5L1.5 10.5M10.5 5L5 10.5M10.5 8.5L8.5 10.5" stroke="#b4b4b4" stroke-width="1"/><path d="M10.5 2.6L2.6 10.5M10.5 6.1L6.1 10.5" stroke="#fff" stroke-width="0.8"/></svg>
</body></html>
